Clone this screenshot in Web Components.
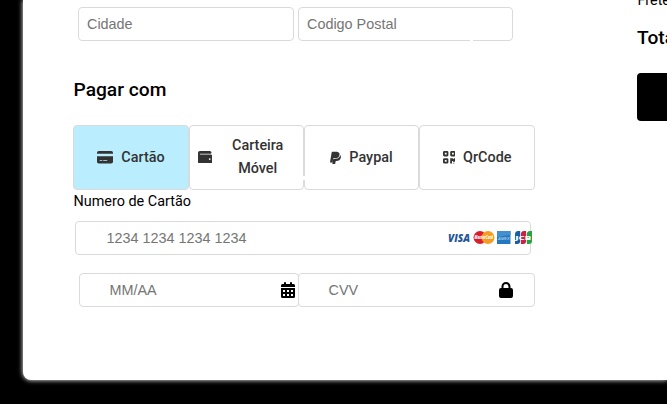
<!DOCTYPE html>
<html lang="pt">
<head>
<meta charset="utf-8">
<title>Checkout</title>
<style>
html,body{margin:0;height:404px;background:#000;overflow:hidden;font-family:Roboto,"Liberation Sans",sans-serif;color:#000}
.row{display:flex}
.city{padding:7px 0 0 5px;gap:4px}
.expiry{padding:18px 0 0 6px}
</style>
</head>
<body>
<checkout-card>
  <div class="row city">
    <form-field style="--w:216px">Cidade</form-field>
    <form-field style="--w:215px" glint>Codigo Postal</form-field>
  </div>
  <section-title>Pagar com</section-title>
  <div class="row">
    <pay-option icon="card" active style="--w:116px">Cartão</pay-option>
    <pay-option icon="wallet" style="--w:115px">Carteira Móvel</pay-option>
    <pay-option icon="paypal" style="--w:115px">Paypal</pay-option>
    <pay-option icon="qr" style="--w:116px">QrCode</pay-option>
  </div>
  <field-label>Numero de Cartão</field-label>
  <form-field style="--w:456px;--pad:30.5px;--end:0px;margin-left:2px">1234 1234 1234 1234<card-brands slot="end"></card-brands></form-field>
  <div class="row expiry">
    <form-field style="--w:220px;--pad:29.5px;--end:3.5px">MM/AA<app-icon name="calendar" slot="end" style="--iw:14px;--ih:16px"></app-icon></form-field>
    <form-field style="--w:237px;--pad:29.5px;--end:21px;margin-left:-1px">CVV<app-icon name="lock" slot="end" style="--iw:14px;--ih:16px"></app-icon></form-field>
  </div>
  <order-summary slot="summary"></order-summary>
</checkout-card>
<script>
const ICONS = {
  card: ['0 0 576 448','<path d="M0 96V64Q0 0 64 0H512Q576 0 576 64V96ZM0 192H576V384Q576 448 512 448H64Q0 448 0 384ZM96 320V352H192V320ZM224 320V352H368V320Z" fill-rule="evenodd"/>'],
  wallet: ['0 0 512 448','<path d="M64 0Q0 0 0 64V384Q0 448 64 448H448Q512 448 512 384V192Q512 128 448 128H80Q64 128 64 112T80 96H448Q480 96 480 50T416 0ZM416 256A32 32 0 1 1 416 320A32 32 0 1 1 416 256Z" fill-rule="evenodd"/>'],
  paypal: ['0 0 384 512','<path d="M111 295c-3 19-17 108-22 134q-1 7-7 7H12q-14 0-12-14L59 46Q61 32 77 32c152 0 164-4 204 12 61 24 60 81 38 142-22 62-73 89-141 90-44 1-61-4-67 19ZM357 152c-2-1-2-2-3 3-2 11-5 23-9 34-43 122-163 111-221 111q-10 0-12 9c-25 152-30 184-30 184q-2 14 12 14h69q14 0 17-12c1-6 0 2 16-99 5-24 15-21 31-21 74 0 133-30 150-118 7-36 5-75-20-105Z"/>'],
  qr: ['0 0 448 448','<path d="M0 48Q0 0 48 0H144Q192 0 192 48V144Q192 192 144 192H48Q0 192 0 144ZM64 64V128H128V64ZM0 304Q0 256 48 256H144Q192 256 192 304V400Q192 448 144 448H48Q0 448 0 400ZM64 320V384H128V320ZM256 48Q256 0 304 0H400Q448 0 448 48V144Q448 192 400 192H304Q256 192 256 144ZM320 64V128H384V64ZM256 256H352V288H384V256H448V384H352V352H320V448H256ZM352 416H384V448H352ZM416 416H448V448H416Z" fill-rule="evenodd"/>'],
  calendar: ['0 0 448 512','<path d="M128 0a32 32 0 0 1 32 32v32h128V32a32 32 0 0 1 64 0v32h48q48 0 48 48v48H0v-48q0-48 48-48h48V32a32 32 0 0 1 32-32ZM0 192H448V464Q448 512 400 512H48Q0 512 0 464ZM64 256V320H128V256ZM192 256V320H256V256ZM320 256V320H384V256ZM64 384V448H128V384ZM192 384V448H256V384ZM320 384V448H384V384Z" fill-rule="evenodd"/>'],
  lock: ['0 0 448 512','<path d="M144 144v48H304V144a80 80 0 0 0-160 0ZM80 192V144a144 144 0 0 1 288 0v48h16q64 0 64 64V448q0 64-64 64H64q-64 0-64-64V256q0-64 64-64Z" fill-rule="evenodd"/>']
};
function define(name, render){
  customElements.define(name, class extends HTMLElement{
    connectedCallback(){
      if(!this.shadowRoot) this.attachShadow({mode:'open'}).innerHTML = render(this);
    }
  });
}
define('app-icon', el => {
  const [box, art] = ICONS[el.getAttribute('name')];
  return `<style>:host{display:block;flex:none;width:var(--iw);height:var(--ih)}svg{display:block;width:100%;height:100%;fill:currentColor}</style><svg viewBox="${box}" preserveAspectRatio="none">${art}</svg>`;
});
define('checkout-card', () => `<style>
:host{display:grid;grid-template-columns:462px 1fr;column-gap:102px;box-sizing:border-box;width:644px;height:380px;margin-left:23px;padding-left:50px;background:#fff;border-radius:0 0 0 8px;box-shadow:0 0 5px #fff}
</style><div><slot></slot></div><slot name="summary"></slot>`);
define('section-title', () => `<style>
:host{display:block;height:84px;box-sizing:border-box;padding:37px 0 0 .5px;font-size:19.2px;font-weight:500;line-height:24px}
</style><slot></slot>`);
define('field-label', () => `<style>
:host{display:block;height:31px;padding-left:.5px;font-size:14.4px;line-height:23px}
</style><slot></slot>`);
define('form-field', () => `<style>
:host{display:flex;position:relative;align-items:center;justify-content:space-between;box-sizing:border-box;width:var(--w);height:34px;padding:0 var(--end,8px) 0 var(--pad,8px);border:1px solid #dadada;border-radius:4px;background:#fff;font:14.4px/18px "Liberation Sans",Arial,sans-serif;color:#757575;white-space:nowrap}
:host([glint])::after{content:"";position:absolute;right:39px;bottom:-1px;width:3px;height:1px;background:#fff}
::slotted(*){color:#000}
</style><span><slot></slot></span><slot name="end"></slot>`);
define('pay-option', el => {
  const size = {card:[16,12.5],wallet:[14.4,12.6],paypal:[11,13.5],qr:[12.6,12.6]}[el.getAttribute('icon')];
  return `<style>
:host{display:flex;position:relative;align-items:center;justify-content:center;gap:8px;box-sizing:border-box;width:var(--w);height:65px;padding:0 8px;border:1px solid #dadada;border-radius:4px;font-size:14.4px;font-weight:500;line-height:23px;text-align:center;color:#333}
:host([active]){background:#baeeff}
:host([icon=wallet]) span{flex:1}
:host([icon=wallet]){padding-top:0;padding-bottom:1px}
:host([icon=paypal])::before{content:"";position:absolute;left:-2px;top:50px;width:3px;height:4px;background:#fff}
</style><app-icon name="${el.getAttribute('icon')}" style="--iw:${size[0]}px;--ih:${size[1]}px"></app-icon><span><slot></slot></span>`;
});
define('card-brands', () => `<style>
:host{display:block;width:86px;height:14px;margin-right:-3px}svg{display:block}
text{font-family:"Open Sans",sans-serif;font-weight:800;font-style:italic}
</style><svg width="86" height="14" viewBox="0 0 86 14">
<text x="1" y="10.5" font-size="10.5" textLength="22" lengthAdjust="spacingAndGlyphs" fill="#1d5799">VISA</text>
<circle cx="33" cy="6.5" r="6.5" fill="#d81f2a"/><circle cx="41" cy="6.5" r="6.5" fill="#f79b20"/>
<text x="27.5" y="8.3" font-size="4.5" textLength="18.5" lengthAdjust="spacingAndGlyphs" fill="#fff">MasterCard</text>
<path d="M50 0h13.5v13H50z" fill="#2478c0"/><path d="M50 0h13.5v4l-13.5 2z" fill="#438fce"/>
<text x="51" y="8.5" font-size="4" textLength="11.5" lengthAdjust="spacingAndGlyphs" fill="#a5cfea" style="font-weight:600">AMEX</text>
<path d="M68 3.5q0-3.5 3-3.5h2.2v10q0 3-3 3H68z" fill="#1460a8"/><path d="M73.9 3.5q0-3.5 3-3.5h2.2v10q0 3-3 3h-2.2z" fill="#cc2142"/><path d="M79.8 3.5q0-3.5 3-3.5H85v10q0 3-3 3h-2.2z" fill="#26a344"/>
<text x="68.2" y="8.8" font-size="5.5" textLength="16" lengthAdjust="spacingAndGlyphs" fill="#fff" style="font-style:normal">JCB</text>
</svg>`);
define('order-summary', () => `<style>
:host{display:block;overflow:hidden;height:130px;white-space:nowrap}
p{margin:-11px 0 0 .5px;font-size:14.4px;font-weight:400;line-height:23px}
h3{margin:14px 0 0;font-size:19.2px;font-weight:500;line-height:24px}
button{display:block;margin:23px 0 0;width:100%;height:48px;border:0;border-radius:4px 0 0 4px;background:#000}
</style><p>Frete</p><h3>Total</h3><button></button>`);
</script>
</body>
</html>
